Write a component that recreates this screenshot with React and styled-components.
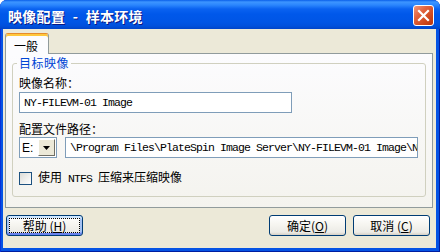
import React from "react";
import styled, { createGlobalStyle } from "styled-components";

const CJK = `"Noto Sans CJK SC", "Liberation Sans", sans-serif`;
const MONO = `"Liberation Mono", "Noto Sans CJK SC", monospace`;

const Global = createGlobalStyle`
  html, body { margin: 0; padding: 0; width: 440px; height: 252px; overflow: hidden; background: #ffffff; }
  #root { width: 440px; height: 252px; }
  * { box-sizing: border-box; }
`;

const Window = styled.div`
  width: 440px;
  height: 252px;
  display: flex;
  flex-direction: column;
  background: #0553e4;
  border-radius: 7px 7px 0 0;
  overflow: hidden;
  box-shadow: inset 1px 0 #0831d9, inset -1px 0 #001ea0, inset 0 -1px #001ea0;
  font-family: ${CJK};
  font-size: 12px;
  color: #000;
`;

const TitleBar = styled.div`
  flex: none;
  height: 29px;
  display: flex;
  align-items: center;
  padding: 2px 6px 0 8px;
  background: linear-gradient(
    180deg,
    #0a5fe9 0px,
    #3d95ff 2px,
    #2b86fd 5px,
    #0a62f0 9px,
    #0058ea 14px,
    #0055e5 22px,
    #0050dc 26px,
    #0044c8 29px
  );
`;

const Title = styled.div`
  flex: 1;
  color: #ffffff;
  font-weight: bold;
  font-size: 14px;
  line-height: 16px;
  letter-spacing: 0.3px;
  word-spacing: 4px;
  text-shadow: 1px 1px 0 #0a1883;
  white-space: nowrap;
`;

const CloseButton = styled.div`
  width: 21px;
  height: 21px;
  border: 1px solid #ffffff;
  border-radius: 3px;
  display: flex;
  align-items: center;
  justify-content: center;
  background: linear-gradient(135deg, #f3987a 0%, #e2643f 35%, #cc4418 75%, #b8350e 100%);
`;

const Client = styled.div`
  flex: 1;
  margin: 0 4px 4px 3px;
  background: #ece9d8;
  display: flex;
  flex-direction: column;
  padding: 4px 3px 0 2px;
`;

const TabStrip = styled.div`
  display: flex;
  height: 21px;
  position: relative;
  z-index: 1;
  margin-bottom: -1px;
`;

const Tab = styled.div`
  width: 44px;
  height: 21px;
  border: 1px solid #919b9c;
  border-top: 1px solid #e68b2c;
  border-bottom: none;
  border-radius: 3px 3px 0 0;
  background: #fcfcfe;
  box-shadow: inset 0 2px #ffc73c;
  display: flex;
  align-items: center;
  justify-content: center;
  padding-top: 3px;
  padding-right: 2px;
  line-height: 14px;
`;

const Panel = styled.div`
  height: 155px;
  flex: none;
  border: 1px solid #919b9c;
  background: linear-gradient(180deg, #fcfcfe 0%, #f4f3ee 100%);
  padding: 2px 6px 10px 6px;
  display: flex;
  flex-direction: column;
`;

const Group = styled.fieldset`
  flex: 1;
  margin: 0;
  min-width: 0;
  border: 1px solid #d0d0bf;
  border-radius: 3px;
  padding: 0 6px;
  display: flex;
  flex-direction: column;
`;

const Legend = styled.legend`
  color: #0046d5;
  padding: 0 2px;
  margin-left: -2px;
  line-height: 14px;
  font-size: 12px;
  letter-spacing: 0.5px;
`;

const Label = styled.div`
  line-height: 14px;
  margin-top: ${(p) => p.$top}px;
  white-space: nowrap;
`;

const TextBox = styled.input`
  display: block;
  width: ${(p) => p.$w}px;
  height: 21px;
  margin: ${(p) => p.$top || 0}px 0 0 0;
  border: 1px solid #7f9db9;
  background: #ffffff;
  padding: 0 0 0 4px;
  font-family: ${MONO};
  font-size: 11.5px;
  letter-spacing: -0.9px;
  color: #000;
  outline: none;
`;

const PathRow = styled.div`
  display: flex;
  gap: 8px;
  margin-top: 1px;
`;

const Combo = styled.div`
  width: 38px;
  height: 21px;
  border: 1px solid #7f9db9;
  background: #ffffff;
  display: flex;
  align-items: stretch;
`;

const ComboText = styled.div`
  flex: 1;
  display: flex;
  align-items: center;
  padding-left: 2px;
  font-family: "Liberation Sans", sans-serif;
  font-size: 12px;
`;

const ComboButton = styled.div`
  width: 17px;
  margin: 1px;
  background: #ece9d8;
  border-top: 1px solid #ffffff;
  border-left: 1px solid #ffffff;
  border-right: 1px solid #716f64;
  border-bottom: 1px solid #716f64;
  display: flex;
  align-items: center;
  justify-content: center;
`;

const CheckRow = styled.div`
  display: flex;
  align-items: center;
  margin-top: 12px;
  line-height: 14px;
  white-space: pre;
`;

const CheckBox = styled.div`
  width: 13px;
  height: 13px;
  border: 1px solid #1c5180;
  background: linear-gradient(135deg, #dcdcd7 0%, #ffffff 100%);
  margin-right: 6px;
`;

const Mono = styled.span`
  font-family: ${MONO};
  font-size: 11.5px;
  letter-spacing: -0.9px;
`;

const ButtonRow = styled.div`
  display: flex;
  align-items: flex-start;
  padding: 7px 3px 0 1px;
`;

const Spacer = styled.div`
  flex: 1;
`;

const Button = styled.div`
  width: 77px;
  height: 21px;
  margin-left: ${(p) => p.$gap || 0}px;
  border: 1px solid #003c74;
  border-radius: 3px;
  background: linear-gradient(180deg, #ffffff 0%, #f6f5f0 45%, #ecebe6 85%, #d6d0c5 100%);
  display: flex;
  align-items: center;
  justify-content: center;
  line-height: 14px;
  white-space: nowrap;
  box-shadow: ${(p) =>
    p.$focused
      ? "inset 0 2px #cee7ff, inset 0 -2px #6982ee, inset 2px 0 #a6c2f2, inset -2px 0 #a6c2f2"
      : "none"};
  outline: ${(p) => (p.$focused ? "1px dotted #000" : "none")};
  outline-offset: -4px;
`;

const Key = styled.span`
  text-decoration: underline;
`;

export default function App() {
  return (
    <>
      <Global />
      <Window>
        <TitleBar>
          <Title>映像配置 - 样本环境</Title>
          <CloseButton>
            <svg width="13" height="13" viewBox="0 0 13 13">
              <path d="M2 2 L11 11 M11 2 L2 11" stroke="#ffffff" strokeWidth="2.2" strokeLinecap="square" />
            </svg>
          </CloseButton>
        </TitleBar>
        <Client>
          <TabStrip>
            <Tab>一般</Tab>
          </TabStrip>
          <Panel>
            <Group>
              <Legend>目标映像</Legend>
              <Label $top={6}>映像名称：</Label>
              <TextBox $w={273} $top={2} readOnly value="NY-FILEVM-01 Image" />
              <Label $top={9}>配置文件路径：</Label>
              <PathRow>
                <Combo>
                  <ComboText>E:</ComboText>
                  <ComboButton>
                    <svg width="7" height="4" viewBox="0 0 7 4">
                      <path d="M0 0 H7 L3.5 4 Z" fill="#000000" />
                    </svg>
                  </ComboButton>
                </Combo>
                <TextBox
                  $w={353}
                  readOnly
                  value="\Program Files\PlateSpin Image Server\NY-FILEVM-01 Image\NY-FILEVM-01 Image.xml"
                />
              </PathRow>
              <CheckRow>
                <CheckBox />
                <span>
                  使用<Mono> NTFS </Mono>压缩来压缩映像
                </span>
              </CheckRow>
            </Group>
          </Panel>
          <ButtonRow>
            <Button $focused>
              帮助 (<Key>H</Key>)
            </Button>
            <Spacer />
            <Button>
              确定(<Key>O</Key>)
            </Button>
            <Button $gap={7}>
              取消 (<Key>C</Key>)
            </Button>
          </ButtonRow>
        </Client>
      </Window>
    </>
  );
}
